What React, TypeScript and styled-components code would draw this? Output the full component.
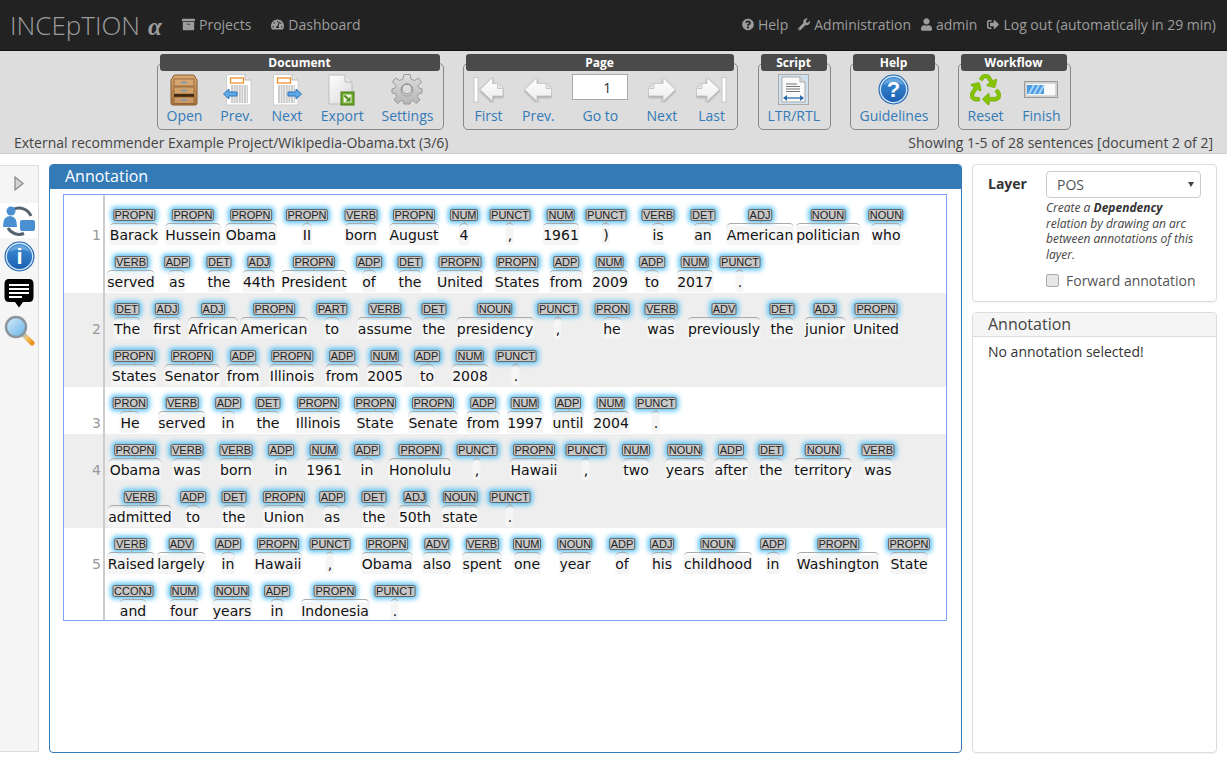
import React from "react";
import styled, { createGlobalStyle } from "styled-components";
import { FaArchive, FaTachometerAlt, FaQuestionCircle, FaWrench, FaUser, FaSignOutAlt, FaRecycle } from "react-icons/fa";

const Global = createGlobalStyle`
  html, body { margin: 0; padding: 0; background: #fff; }
  body { font-family: "Open Sans", "Liberation Sans", sans-serif; font-size: 14px; color: #333; }
  * { box-sizing: border-box; }
`;

const Page = styled.div`
  width: 1227px; height: 763px; display: flex; flex-direction: column; overflow: hidden;
`;
const Navbar = styled.header`
  height: 51px; background: #222; border-bottom: 1px solid #111;
  display: flex; align-items: center; color: #9d9d9d; padding: 0 11px 1px 10px;
`;
const Brand = styled.div`
  font-size: 26px; font-weight: 300; color: #9d9d9d; display: flex; align-items: baseline; width: 172px;
`;
const Alpha = styled.span`
  font-family: "Liberation Serif", serif; font-style: italic; font-weight: 700; font-size: 25px; margin-left: 8px;
`;
const NavGroup = styled.nav`
  display: flex; align-items: center; gap: 20px;
`;
const NavRight = styled(NavGroup)`
  margin-left: auto; gap: 10px;
`;
const NavLink = styled.span<{ $icon?: number }>`
  display: flex; align-items: center; gap: 4px; font-size: 14px; color: #9d9d9d; white-space: nowrap;
  svg { width: ${p => p.$icon ?? 13}px; height: 13px; flex: none; }
`;
const Toolbar = styled.section`
  height: 103px; background: #ddd; border-bottom: 1px solid #ccc; display: flex; flex-direction: column;
`;
const ActionRow = styled.div`
  display: flex; justify-content: center; gap: 19px; height: 82px; padding-top: 12px; flex: none;
`;
const Frame = styled.div<{ $w: number; $after?: number }>`
  width: ${p => p.$w}px; height: 67px; border: 1px solid #888; border-radius: 5px;
  padding: 0 9px; display: flex; flex-direction: column; align-self: flex-start;
  margin-right: ${p => p.$after ?? 0}px;
`;
const FrameTitle = styled.div`
  margin: -10px -6px 0 -7px; height: 17px; line-height: 17px; background: #4a4a4a; border-radius: 3px;
  color: #fff; font-weight: 700; font-size: 12px; text-align: center; flex: none;
`;
const FrameBody = styled.div`
  display: flex; justify-content: space-between; gap: 16px; margin-top: 2px;
`;
const ActionCell = styled.div`
  min-width: 32px; display: flex; flex-direction: column; align-items: center;
`;
const IconSlot = styled.div`
  height: 33px; width: 32px; display: flex; align-items: center; justify-content: center;
  svg { flex: none; }
`;
const ActionLabel = styled.span`
  font-size: 14px; line-height: 20px; color: #337ab7; white-space: nowrap;
`;
const GotoInput = styled.input`
  width: 56px; height: 26px; border: 1px solid #aaa; background: #fff; text-align: center;
  font: 14px "Open Sans", sans-serif; color: #333; padding: 0 0 0 14px; margin-top: 1px; display: block;
`;
const GotoSlot = styled.div`
  height: 33px;
`;
const StatusLine = styled.div`
  display: flex; justify-content: space-between; padding: 0 14px; font-size: 14px; line-height: 20px; color: #444;
`;
const Workspace = styled.main`
  flex: 1; display: flex; padding: 10px 10px 10px 0; min-height: 0;
`;
const Sidebar = styled.aside`
  width: 39px; background: #f5f5f5; border: 1px solid #ddd; border-left: none; margin: 1px 0;
  display: flex; flex-direction: column; align-items: stretch; padding-top: 10px;
`;
const SideToggle = styled.div`
  height: 27px; display: flex; justify-content: center;
`;
const SideItem = styled.div<{ $active?: boolean }>`
  height: ${p => p.$active ? 35 : 37}px; display: flex; align-items: center; justify-content: center;
  background: ${p => p.$active ? "#fff" : "transparent"};
`;
const AnnotationPanel = styled.section`
  width: 913px; margin-left: 10px; border: 1px solid #337ab7; border-radius: 4px; overflow: hidden;
  display: flex; flex-direction: column;
`;
const AnnotationHead = styled.div`
  height: 24px; background: #337ab7; color: #fff; font-size: 16px; line-height: 23px; padding-left: 15px; flex: none;
`;
const AnnotationBody = styled.div`
  padding: 5px 14px 5px 13px;
`;
const Canvas = styled.div`
  height: 427px; border: 1px solid #7fa2ff; overflow: hidden; background: #fff;
`;
const Sentence = styled.div<{ $alt?: boolean; $first?: boolean }>`
  display: flex; background: ${p => p.$alt ? "#eee" : "#fff"}; padding-top: ${p => p.$first ? 4 : 0}px;
`;
const Gutter = styled.div<{ $first?: boolean }>`
  width: 41px; flex: none; border-right: 2px solid #ccc; margin-top: ${p => p.$first ? -4 : 0}px;
  padding: ${p => p.$first ? 31 : 27}px 2px 0 0; text-align: right;
  font: 14px/19px "DejaVu Sans", sans-serif; color: #999;
`;
const Lines = styled.div`
  flex: 1;
`;
const Line = styled.div`
  position: relative; height: 47px;
`;
const Token = styled.div`
  position: absolute; top: 10px; transform: translateX(-50%);
  display: flex; flex-direction: column; align-items: center;
`;
const Tag = styled.span`
  height: 12px; font: 11px/10px "Liberation Sans", sans-serif; color: #222;
  background: #c8c8c8; border: 1px solid #666; border-radius: 2px; padding: 0 .5px;
  box-shadow: 0 0 5px 2px #55c0f5; white-space: nowrap;
`;
const Word = styled.span`
  position: relative; margin-top: 5px; height: 19px; padding: 0 0.5px;
  font: 14px/18px "DejaVu Sans", sans-serif; color: #111; background: #f5f5f5; border-radius: 3px; white-space: nowrap;
  min-width: 8px; text-align: center;
  &::before {
    content: ""; position: absolute; left: 0; right: 0; top: -3px; height: 4px;
    border-top: 1px solid #aaa; border-radius: 5px 5px 0 0;
  }
  &::after {
    content: ""; position: absolute; left: 50%; top: -5px; width: 1px; height: 2px; background: #aaa;
  }
`;
const Side = styled.aside`
  width: 245px; margin-left: 10px; display: flex; flex-direction: column; gap: 10px;
`;
const LayerCard = styled.div`
  height: 138px; border: 1px solid #ddd; border-radius: 4px; padding: 6px 15px; display: flex;
  box-shadow: 0 1px 1px rgba(0,0,0,.05);
`;
const LayerLabel = styled.label`
  width: 58px; flex: none; font-weight: 700; font-size: 14px; line-height: 26px; color: #333;
`;
const LayerControls = styled.div`
  flex: 1;
`;
const SelectWrap = styled.div`
  position: relative;
  &::after {
    content: ""; position: absolute; right: 7px; top: 11px; border: 3.5px solid transparent;
    border-top: 5px solid #444; border-bottom: none;
  }
`;
const LayerSelect = styled.select`
  appearance: none; display: block; width: 155px; height: 27px; border: 1px solid #ccc; border-radius: 4px;
  background: #fff; padding: 0 10px; font: 14px "Open Sans", sans-serif; color: #555;
`;
const LayerHint = styled.p`
  margin: 2px 0 0; font-size: 12px; line-height: 15.7px; font-style: italic; color: #444;
  b { font-weight: 700; color: #333; }
`;
const CheckRow = styled.label`
  display: flex; align-items: center; gap: 7px; margin-top: 8px; font-size: 14px; line-height: 20px; color: #555;
`;
const CheckBox = styled.input`
  appearance: none; width: 13px; height: 13px; margin: 0; flex: none;
  background: #e6e6e6; border: 1px solid #aaa; border-radius: 2px;
`;
const DetailCard = styled.div`
  flex: 1; border: 1px solid #ddd; border-radius: 4px; box-shadow: 0 1px 1px rgba(0,0,0,.05);
`;
const DetailHead = styled.div`
  height: 24px; background: #f5f5f5; border-bottom: 1px solid #ddd; font-size: 16px; line-height: 23px;
  padding-left: 15px; color: #444; border-radius: 3px 3px 0 0;
`;
const DetailBody = styled.div`
  padding: 5px 15px; font-size: 14px; line-height: 20px; color: #333;
`;

/* ---------- icons ---------- */
const Defs = () => (
  <svg width="0" height="0" style={{ position: "absolute" }}>
    <defs>
      <linearGradient id="wood" x1="0" y1="0" x2="0" y2="1"><stop offset="0" stopColor="#dcaa74" /><stop offset="1" stopColor="#a9743f" /></linearGradient>
      <linearGradient id="page" x1="0" y1="0" x2="1" y2="1"><stop offset="0" stopColor="#fff" /><stop offset="1" stopColor="#d8d8d8" /></linearGradient>
      <linearGradient id="orb" x1="0" y1="0" x2="0" y2="1"><stop offset="0" stopColor="#3f8fd8" /><stop offset="1" stopColor="#1a5fb0" /></linearGradient>
      <linearGradient id="gear" x1="0" y1="0" x2="0" y2="1"><stop offset="0" stopColor="#dedede" /><stop offset="1" stopColor="#b6b6b6" /></linearGradient>
      <linearGradient id="nav" x1="0" y1="0" x2="0" y2="1"><stop offset="0" stopColor="#fff" /><stop offset="1" stopColor="#ececec" /></linearGradient>
      <linearGradient id="lens" x1="0" y1="0" x2="1" y2="1"><stop offset="0" stopColor="#d9effc" /><stop offset="1" stopColor="#62b0e6" /></linearGradient>
      <linearGradient id="handle" gradientUnits="userSpaceOnUse" x1="20" y1="20" x2="28" y2="28"><stop offset="0" stopColor="#bfbfbf" /><stop offset=".35" stopColor="#f3c76a" /><stop offset="1" stopColor="#e8921c" /></linearGradient>
    </defs>
  </svg>
);

const CabinetIcon = () => (
  <svg width="28" height="32" viewBox="0 0 28 32">
    <path d="M3 3 Q3 1 6 1 H22 Q25 1 25 3 L27 6 V29 Q27 31 25 31 H3 Q1 31 1 29 V6 Z" fill="url(#wood)" stroke="#8a5a2b" />
    <rect x="4" y="5" width="20" height="7" fill="#d6a672" stroke="#8a5a2b" strokeWidth=".7" />
    <rect x="4" y="13" width="20" height="7" fill="#d0a06a" stroke="#8a5a2b" strokeWidth=".7" />
    <rect x="4" y="20" width="20" height="3" fill="#3e2a17" />
    <rect x="4" y="23" width="20" height="6.5" fill="#cc9a64" stroke="#8a5a2b" strokeWidth=".7" />
    <rect x="11" y="7.5" width="6" height="2" fill="#8d98a3" /><rect x="11" y="15.5" width="6" height="2" fill="#8d98a3" /><rect x="11" y="25" width="6" height="2" fill="#8d98a3" />
  </svg>
);
const DocLines = () => (
  <g fill="none" stroke="#9a9a9a" strokeWidth="1" strokeDasharray="2 .6">
    {[12, 14, 16, 18, 20, 22, 24, 26, 28].map(y => <path key={y} d={`M5 ${y} H22`} />)}
  </g>
);
const DocIcon = ({ dir }: { dir: "prev" | "next" }) => (
  <svg width="32" height="33" viewBox="0 0 32 33">
    <g transform={dir === "prev" ? "translate(5 1)" : "translate(2 1)"}>
      <path d="M.5 .5 H19 L25 6 V31 H.5 Z" fill="#fff" stroke="#cfcfcf" />
      <path d="M19 .5 V6 H25" fill="#e4e4e4" stroke="#bbb" />
      <rect x="4.5" y="4" width="13" height="5" fill="#fff" stroke="#f08a1c" strokeWidth="1.2" />
      <DocLines />
    </g>
    <g transform={dir === "prev" ? "translate(2 0)" : "translate(16 0)"}>
      {dir === "prev"
        ? <path d="M0.5 21 L6 16 V19 H14 V23 H6 V26 Z" fill="#5fa9e6" stroke="#2f72b8" />
        : <path d="M14.5 21 L9 16 V19 H1 V23 H9 V26 Z" fill="#5fa9e6" stroke="#2f72b8" />}
    </g>
  </svg>
);
const ExportIcon = () => (
  <svg width="28" height="32" viewBox="0 0 28 32">
    <path d="M1 1 H17 L24 8 V30 H1 Z" fill="url(#page)" stroke="#bbb" />
    <path d="M17 1 V8 H24" fill="#e8e8e8" stroke="#bbb" />
    <rect x="13" y="18" width="13" height="13" fill="#6aa82a" stroke="#4a7a18" />
    <rect x="15.5" y="20.5" width="8" height="8" fill="#eef5df" />
    <path d="M16.5 21.5 L20 25" stroke="#4a8a18" strokeWidth="2" />
    <path d="M22.5 22.5 V27.5 H17.5 Z" fill="#4a8a18" />
  </svg>
);
const GearIcon = () => (
  <svg width="32" height="32" viewBox="0 0 32 32">
    <path fill="url(#gear)" stroke="#999" fillRule="evenodd" d="M13 1.5 H19 L20 6 L23.5 7.5 L27.5 5 L30.5 9 L27 12.5 L28 15 L31 16 V20 L27.5 20.5 L26.5 23.5 L29 27 L25 30.5 L22 27.5 L19.5 28.5 L19 31 H13 L12.5 28.5 L10 27.5 L7 30.5 L3 27 L5.5 23.5 L4.5 20.5 L1 20 V16 L4 15 L5 12.5 L1.5 9 L4.5 5 L8.5 7.5 L12 6 Z M16 11 A6 6 0 1 0 16.01 11 Z" transform="translate(0 -1)" />
    <circle cx="16" cy="15" r="5" fill="none" stroke="#888" />
  </svg>
);
const ArrowShape = ({ w, flip }: { w: number; flip?: boolean }) => (
  <g transform={flip ? `translate(${w} 0) scale(-1 1)` : undefined} style={{ filter: "drop-shadow(0 1px 1px rgba(0,0,0,.3))" }}>
    <path d={`M.5 12.5 L13 .5 V6.5 H${w - 6} L${w - .5} 11.5 V19 H13 V24.5 Z`} fill="url(#nav)" stroke="#c8c8c8" />
    <path d={`M${w - 6} 6.5 V11.5 H${w - .5}`} fill="#e6e6e6" stroke="#c8c8c8" />
  </g>
);
const NavArrow = ({ kind }: { kind: "first" | "prev" | "next" | "last" }) => {
  const flip = kind === "next" || kind === "last";
  const edge = kind === "first" || kind === "last";
  const w = edge ? 31 : 28;
  return (
    <svg width={w} height="26" viewBox={`0 0 ${w} 26`}>
      {kind === "first" && <rect x="1" y=".5" width="4" height="24.5" fill="#fff" stroke="#c8c8c8" />}
      {kind === "last" && <rect x="26" y=".5" width="4" height="24.5" fill="#fff" stroke="#c8c8c8" />}
      <g transform={kind === "first" ? "translate(6.5 0)" : "translate(0 0)"}><ArrowShape w={edge ? 24 : 28} flip={flip} /></g>
    </svg>
  );
};
const ScriptIcon = () => (
  <svg width="31" height="31" viewBox="0 0 31 31">
    <rect x=".5" y=".5" width="30" height="30" fill="#cfe0ee" stroke="#aaa" />
    <path d="M4 3 H22 L27 8 V28 H4 Z" fill="#fafafa" stroke="#aaa" />
    <path d="M22 3 V8 H27" fill="#ddd" stroke="#aaa" />
    <path d="M8 10 H19 M8 12.5 H22 M8 15 H22 M8 17.5 H22" stroke="#777" />
    <path d="M6 24 H25" stroke="#2c6db0" strokeWidth="1.3" />
    <path d="M9 21 L5 24 L9 27 Z M22 21 L26 24 L22 27 Z" fill="#2c6db0" />
  </svg>
);
const OrbIcon = ({ glyph, size = 31 }: { glyph: string; size?: number }) => (
  <svg width={size} height={size} viewBox="0 0 31 31">
    <circle cx="15.5" cy="15.5" r="15" fill="#1f64b0" />
    <circle cx="15.5" cy="15.5" r="13.2" fill="url(#orb)" stroke="#cfe3f6" strokeWidth="1.4" />
    <path d="M5 11 A11.5 11.5 0 0 1 26 11 A22 22 0 0 0 5 11 Z" fill="#fff" opacity=".25" />
    <text x="15.5" y="23" textAnchor="middle" fontFamily="Liberation Sans, sans-serif" fontWeight="700" fontSize="22" fill="#fff">{glyph}</text>
  </svg>
);
const ProgressIcon = () => (
  <svg width="34" height="17" viewBox="0 0 34 17">
    <rect x=".5" y=".5" width="33" height="16" fill="#e4e4e4" stroke="#999" />
    <rect x="2" y="2" width="30" height="13" fill="#fafafa" stroke="#bbb" />
    <rect x="3" y="4" width="17" height="9" fill="#4a9be0" />
    <path d="M5 13 L10 4 M10 13 L15 4 M15 13 L20 4" stroke="#a8d4f5" strokeWidth="2" />
  </svg>
);
const ToggleIcon = () => (
  <svg width="10" height="15" viewBox="0 0 10 15">
    <path d="M1 1 L9 7.5 L1 14 Z" fill="#d4d4d4" stroke="#888" strokeWidth="1.2" />
  </svg>
);
const SyncIcon = () => (
  <svg width="32" height="31" viewBox="0 0 32 31">
    <path d="M10 4.5 A13 13 0 0 1 28 11" fill="none" stroke="#54636f" strokeWidth="3" />
    <path d="M5 23 A13 13 0 0 0 21 28.5" fill="none" stroke="#54636f" strokeWidth="3" />
    <circle cx="8" cy="6" r="4.5" fill="#4a90d0" />
    <path d="M0 22 Q0 11 7 11 Q14 11 14 22 Z" fill="#4a90d0" />
    <rect x="17" y="15" width="15" height="11" rx="2" fill="#4a90d0" />
  </svg>
);
const ChatIcon = () => (
  <svg width="30" height="29" viewBox="0 0 30 29">
    <path d="M5 0 H25 Q29.5 0 29.5 5 V18 Q29.5 23 25 23 H19 L15 28.5 L11 23 H5 Q.5 23 .5 18 V5 Q.5 0 5 0 Z" fill="#000" />
    <path d="M5 6 H25 M5 10 H25 M5 14 H25 M5 18 H18" stroke="#fff" strokeWidth="1.8" />
  </svg>
);
const LensIcon = () => (
  <svg width="31" height="31" viewBox="0 0 31 31">
    <path d="M20 20 L28 28" stroke="url(#handle)" strokeWidth="5" strokeLinecap="round" />
    <circle cx="12" cy="12" r="10" fill="url(#lens)" stroke="#8c949b" strokeWidth="2.4" />
  </svg>
);

/* ---------- data ---------- */
type T = [string, string, number];
const sentences: T[][][] = [
  [
    [["PROPN","Barack",134],["PROPN","Hussein",193],["PROPN","Obama",251],["PROPN","II",307],["VERB","born",361],["PROPN","August",414],["NUM","4",464],["PUNCT",",",510],["NUM","1961",561],["PUNCT",")",606],["VERB","is",658],["DET","an",703],["ADJ","American",760],["NOUN","politician",828],["NOUN","who",886]],
    [["VERB","served",131],["ADP","as",177],["DET","the",219],["ADJ","44th",259],["PROPN","President",314],["ADP","of",369],["DET","the",410],["PROPN","United",460],["PROPN","States",517],["ADP","from",566],["NUM","2009",610],["ADP","to",652],["NUM","2017",695],["PUNCT",".",740]],
  ],
  [
    [["DET","The",127],["ADJ","first",167],["ADJ","African",213],["PROPN","American",274],["PART","to",332],["VERB","assume",385],["DET","the",434],["NOUN","presidency",495],["PUNCT",",",558],["PRON","he",612],["VERB","was",661],["ADV","previously",724],["DET","the",782],["ADJ","junior",825],["PROPN","United",876]],
    [["PROPN","States",134],["PROPN","Senator",192],["ADP","from",243],["PROPN","Illinois",292],["ADP","from",342],["NUM","2005",385],["ADP","to",427],["NUM","2008",470],["PUNCT",".",516]],
  ],
  [
    [["PRON","He",130],["VERB","served",182],["ADP","in",228],["DET","the",268],["PROPN","Illinois",318],["PROPN","State",375],["PROPN","Senate",433],["ADP","from",483],["NUM","1997",525],["ADP","until",568],["NUM","2004",611],["PUNCT",".",656]],
  ],
  [
    [["PROPN","Obama",135],["VERB","was",187],["VERB","born",236],["ADP","in",281],["NUM","1961",324],["ADP","in",367],["PROPN","Honolulu",420],["PUNCT",",",477],["PROPN","Hawaii",534],["PUNCT",",",586],["NUM","two",636],["NOUN","years",685],["ADP","after",731],["DET","the",771],["NOUN","territory",823],["VERB","was",878]],
    [["VERB","admitted",140],["ADP","to",193],["DET","the",234],["PROPN","Union",284],["ADP","as",332],["DET","the",374],["ADJ","50th",415],["NOUN","state",460],["PUNCT",".",510]],
  ],
  [
    [["VERB","Raised",131],["ADV","largely",181],["ADP","in",228],["PROPN","Hawaii",278],["PUNCT",",",330],["PROPN","Obama",387],["ADV","also",437],["VERB","spent",482],["NUM","one",527],["NOUN","year",575],["ADP","of",622],["ADJ","his",662],["NOUN","childhood",718],["ADP","in",773],["PROPN","Washington",838],["PROPN","State",909]],
    [["CCONJ","and",133],["NUM","four",184],["NOUN","years",232],["ADP","in",277],["PROPN","Indonesia",335],["PUNCT",".",395]],
  ],
] as T[][][];

const LINE_ORIGIN = 105;

export default function App() {
  return (
    <Page>
      <Global />
      <Defs />
      <Navbar>
        <Brand>INCEpTION<Alpha>α</Alpha></Brand>
        <NavGroup>
          <NavLink><FaArchive />Projects</NavLink>
          <NavLink><FaTachometerAlt />Dashboard</NavLink>
        </NavGroup>
        <NavRight>
          <NavLink $icon={12}><FaQuestionCircle />Help</NavLink>
          <NavLink $icon={12}><FaWrench />Administration</NavLink>
          <NavLink $icon={11}><FaUser />admin</NavLink>
          <NavLink $icon={12}><FaSignOutAlt />Log out (automatically in 29 min)</NavLink>
        </NavRight>
      </Navbar>
      <Toolbar>
        <ActionRow>
          <Frame $w={287}>
            <FrameTitle>Document</FrameTitle>
            <FrameBody>
              <ActionCell><IconSlot><CabinetIcon /></IconSlot><ActionLabel>Open</ActionLabel></ActionCell>
              <ActionCell><IconSlot><DocIcon dir="prev" /></IconSlot><ActionLabel>Prev.</ActionLabel></ActionCell>
              <ActionCell><IconSlot><DocIcon dir="next" /></IconSlot><ActionLabel>Next</ActionLabel></ActionCell>
              <ActionCell><IconSlot><ExportIcon /></IconSlot><ActionLabel>Export</ActionLabel></ActionCell>
              <ActionCell><IconSlot><GearIcon /></IconSlot><ActionLabel>Settings</ActionLabel></ActionCell>
            </FrameBody>
          </Frame>
          <Frame $w={275} $after={1}>
            <FrameTitle>Page</FrameTitle>
            <FrameBody>
              <ActionCell><IconSlot><NavArrow kind="first" /></IconSlot><ActionLabel>First</ActionLabel></ActionCell>
              <ActionCell><IconSlot><NavArrow kind="prev" /></IconSlot><ActionLabel>Prev.</ActionLabel></ActionCell>
              <ActionCell><GotoSlot><GotoInput readOnly value="1" /></GotoSlot><ActionLabel>Go to</ActionLabel></ActionCell>
              <ActionCell><IconSlot><NavArrow kind="next" /></IconSlot><ActionLabel>Next</ActionLabel></ActionCell>
              <ActionCell><IconSlot><NavArrow kind="last" /></IconSlot><ActionLabel>Last</ActionLabel></ActionCell>
            </FrameBody>
          </Frame>
          <Frame $w={73}>
            <FrameTitle>Script</FrameTitle>
            <FrameBody>
              <ActionCell><IconSlot><ScriptIcon /></IconSlot><ActionLabel>LTR/RTL</ActionLabel></ActionCell>
            </FrameBody>
          </Frame>
          <Frame $w={89}>
            <FrameTitle>Help</FrameTitle>
            <FrameBody>
              <ActionCell><IconSlot><OrbIcon glyph="?" /></IconSlot><ActionLabel>Guidelines</ActionLabel></ActionCell>
            </FrameBody>
          </Frame>
          <Frame $w={113}>
            <FrameTitle>Workflow</FrameTitle>
            <FrameBody>
              <ActionCell><IconSlot><FaRecycle size={31} color="#85c400" stroke="#5a8c00" strokeWidth={6} /></IconSlot><ActionLabel>Reset</ActionLabel></ActionCell>
              <ActionCell><IconSlot><ProgressIcon /></IconSlot><ActionLabel>Finish</ActionLabel></ActionCell>
            </FrameBody>
          </Frame>
        </ActionRow>
        <StatusLine>
          <span>External recommender Example Project/Wikipedia-Obama.txt (3/6)</span>
          <span>Showing 1-5 of 28 sentences [document 2 of 2]</span>
        </StatusLine>
      </Toolbar>
      <Workspace>
        <Sidebar>
          <SideToggle><ToggleIcon /></SideToggle>
          <SideItem $active><SyncIcon /></SideItem>
          <SideItem><OrbIcon glyph="i" /></SideItem>
          <SideItem><ChatIcon /></SideItem>
          <SideItem><LensIcon /></SideItem>
        </Sidebar>
        <AnnotationPanel>
          <AnnotationHead>Annotation</AnnotationHead>
          <AnnotationBody>
            <Canvas>
              {sentences.map((lines, s) => (
                <Sentence key={s} $alt={s % 2 === 1} $first={s === 0}>
                  <Gutter $first={s === 0}>{s + 1}</Gutter>
                  <Lines>
                    {lines.map((line, l) => (
                      <Line key={l}>
                        {line.map(([tag, word, x], i) => (
                          <Token key={i} style={{ left: x - LINE_ORIGIN }}>
                            <Tag>{tag}</Tag>
                            <Word>{word}</Word>
                          </Token>
                        ))}
                      </Line>
                    ))}
                  </Lines>
                </Sentence>
              ))}
            </Canvas>
          </AnnotationBody>
        </AnnotationPanel>
        <Side>
          <LayerCard>
            <LayerLabel>Layer</LayerLabel>
            <LayerControls>
              <SelectWrap>
                <LayerSelect defaultValue="POS"><option>POS</option></LayerSelect>
              </SelectWrap>
              <LayerHint>Create a <b>Dependency</b> relation by drawing an arc between annotations of this layer.</LayerHint>
              <CheckRow><CheckBox type="checkbox" />Forward annotation</CheckRow>
            </LayerControls>
          </LayerCard>
          <DetailCard>
            <DetailHead>Annotation</DetailHead>
            <DetailBody>No annotation selected!</DetailBody>
          </DetailCard>
        </Side>
      </Workspace>
    </Page>
  );
}
